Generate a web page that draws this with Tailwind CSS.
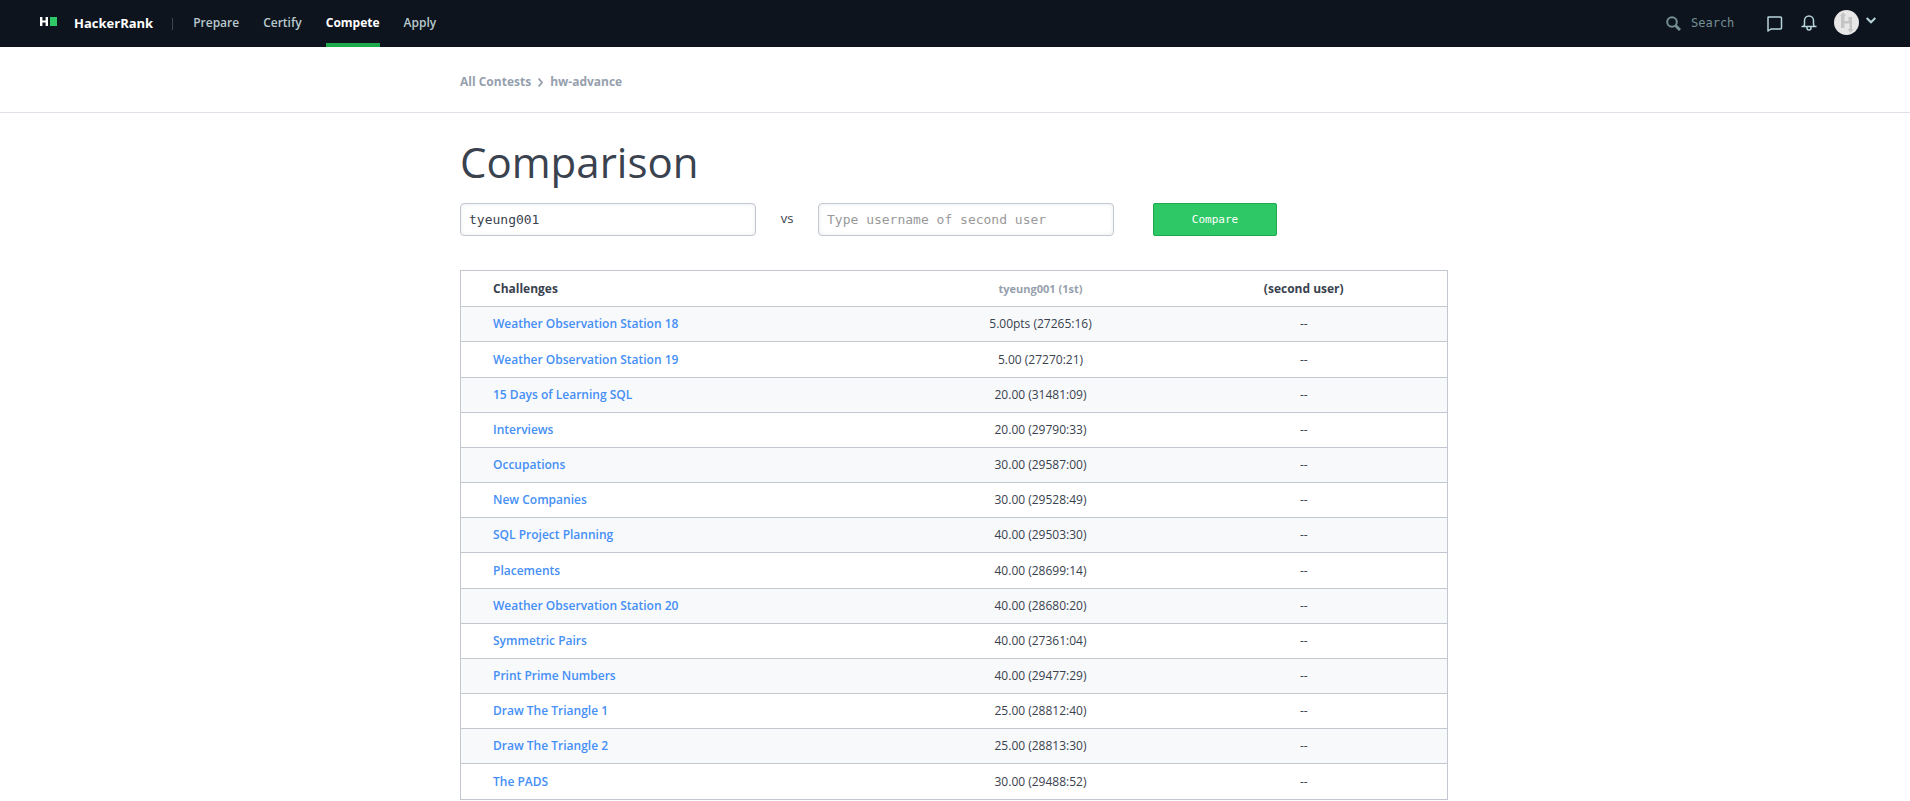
<!DOCTYPE html>
<html lang="en">
<head>
<meta charset="utf-8">
<meta name="viewport" content="width=device-width, initial-scale=1">
<title>Comparison | HackerRank</title>
<script src="https://cdn.jsdelivr.net/npm/@tailwindcss/browser@4"></script>
</head>
<body class="bg-white font-['Open_Sans',sans-serif] text-xs leading-5 text-[#39424e]">
<header class="flex h-[47px] items-center bg-[#0e141e] pr-[34px] pl-10 font-semibold text-[#b7c9cc]">
  <a href="#" class="flex items-center pb-1" aria-label="HackerRank home">
    <svg width="18" height="10" viewBox="0 0 18 10" aria-hidden="true"><path d="M0 0h2.400v3.500h3.200V0H8v9H5.600V5.500H2.400V9H0z" fill="#fff"/><path d="M10 0h7v9h-7z" fill="#2ec866"/></svg>
  </a>
  <a href="#" class="ml-4 pb-0.5 text-[13px] font-bold text-white">HackerRank</a>
  <span class="mr-5 ml-[19px] h-3 w-px bg-[#39494f]"></span>
  <nav class="flex h-full gap-6">
    <a href="#" class="flex items-center pb-0.5">Prepare</a>
    <a href="#" class="flex items-center pb-0.5">Certify</a>
    <a href="#" class="flex items-center border-b-4 border-[#1ba94c] pt-0.5 font-bold text-white">Compete</a>
    <a href="#" class="flex items-center pb-0.5">Apply</a>
  </nav>
  <div class="ml-auto flex items-center">
    <label class="flex items-center gap-2.5">
      <svg width="15" height="15" viewBox="0 0 15 15" fill="none" stroke="#738f93" aria-hidden="true"><circle cx="6" cy="6" r="4.8" stroke-width="2"/><path d="M9.500 9.500l4.500 4.500" stroke-width="3"/></svg>
      <input type="search" aria-label="Search" placeholder="Search" class="w-[76px] pb-0.5 font-['DejaVu_Sans_Mono',monospace] text-xs font-normal outline-none placeholder:text-[#738f93]">
    </label>
    <button aria-label="Messages"><svg width="16" height="16" viewBox="0 0 16 16" fill="none" stroke="#b7d5dc" stroke-width="1.500" stroke-linejoin="round"><path d="M1.500 1h12q1 0 1 1v10q0 1-1 1H4L1 15V1.500q0-.5.5-.5z"/></svg></button>
    <button class="ml-[18px] pb-0.5" aria-label="Notifications"><svg width="16" height="16" viewBox="0 0 16 16" fill="none" stroke="#b7d5dc" stroke-width="1.500"><path d="M.5 11.500h15M2.500 11.500q1-1 1-2.500V5.500a4.500 4.500 0 0 1 9 0V9q0 1.500 1 2.500M6 12v1a2 2 0 0 0 4 0v-1"/></svg></button>
    <button class="ml-[17px] flex items-center gap-[7px] pb-0.5" aria-label="Profile menu">
      <svg width="25" height="25" viewBox="0 0 25 25"><circle cx="12.500" cy="12.500" r="12.500" fill="#e7e7e7"/><path d="M9 2l3 4h-1.500v5h4V7H18v12h1.500l-3 4-3-4h2v-5.500h-5V18H7V6H6z" fill="#c5c5c5"/></svg>
      <svg class="mb-1" width="10" height="7" viewBox="0 0 10 7" fill="none" stroke="#b7d5dc" stroke-width="2"><path d="M.7 1L5 5.300 9.300 1"/></svg>
    </button>
  </div>
</header>
<div class="border-b border-[#dfe1e8] pr-[18px] pl-4">
  <nav aria-label="Breadcrumb" class="mx-auto flex max-w-[988px] items-center gap-[7px] pt-[25px] pb-5 font-bold text-[#969fad]">
    <a href="#">All Contests</a>
    <svg width="5" height="9" viewBox="0 0 5 9" fill="none" stroke="#969fad" stroke-width="1.800" aria-hidden="true"><path d="M.6.6l3.400 3.900L.6 8.400"/></svg>
    <a href="#">hw-advance</a>
  </nav>
</div>
<main class="pr-[18px] pl-4">
  <div class="mx-auto max-w-[988px]">
    <h1 class="pt-6 text-[42px] leading-[50px] font-medium">Comparison</h1>
    <form class="mt-4 flex max-w-[817px] items-center font-['DejaVu_Sans_Mono',monospace] text-[13px]">
      <input type="text" aria-label="First username" value="tyeung001" class="h-[33px] min-w-0 flex-1 rounded border border-[#c2c7d0] px-2 shadow-[inset_0_0_5px_#e9ebee] outline-none">
      <span class="w-[62px] pb-1 text-center font-['Open_Sans',sans-serif]">vs</span>
      <input type="text" aria-label="Second username" placeholder="Type username of second user" class="h-[33px] min-w-0 flex-1 rounded border border-[#c2c7d0] px-2 shadow-[inset_0_0_5px_#e9ebee] outline-none placeholder:text-[#999]">
      <button type="button" class="ml-[39px] h-[33px] w-[124px] rounded-[2px] border border-[#1ba94c] bg-[#2ec866] text-[11px] text-white">Compare</button>
    </form>
    <table class="mt-[34px] mb-px w-full table-fixed border-collapse border border-[#c2c7d0] text-center">
      <thead>
        <tr class="h-9">
          <th scope="col" class="pl-8 text-left font-bold">Challenges</th>
          <th scope="col" class="w-[240px] text-[11px] font-bold"><a href="#" class="text-[#969fad]">tyeung001 (1st)</a></th>
          <th scope="col" class="w-[287px] font-bold">(second user)</th>
        </tr>
      </thead>
      <tbody id="rows"></tbody>
    </table>
  </div>
</main>
<script>
const challenges = [
  ["Weather Observation Station 18", "5.00pts (27265:16)"],
  ["Weather Observation Station 19", "5.00 (27270:21)"],
  ["15 Days of Learning SQL", "20.00 (31481:09)"],
  ["Interviews", "20.00 (29790:33)"],
  ["Occupations", "30.00 (29587:00)"],
  ["New Companies", "30.00 (29528:49)"],
  ["SQL Project Planning", "40.00 (29503:30)"],
  ["Placements", "40.00 (28699:14)"],
  ["Weather Observation Station 20", "40.00 (28680:20)"],
  ["Symmetric Pairs", "40.00 (27361:04)"],
  ["Print Prime Numbers", "40.00 (29477:29)"],
  ["Draw The Triangle 1", "25.00 (28812:40)"],
  ["Draw The Triangle 2", "25.00 (28813:30)"],
  ["The PADS", "30.00 (29488:52)"]
];
document.getElementById("rows").innerHTML = challenges.map(([name, score]) => `
  <tr class="h-[35px] border-t border-[#c2c7d0] odd:bg-[#f8f9fb] nth-[6n+2]:h-9">
    <td class="pl-8 text-left font-semibold"><a href="#" class="text-[#458ff6]">${name}</a></td>
    <td>${score}</td>
    <td>--</td>
  </tr>`).join("");
</script>
</body>
</html>
